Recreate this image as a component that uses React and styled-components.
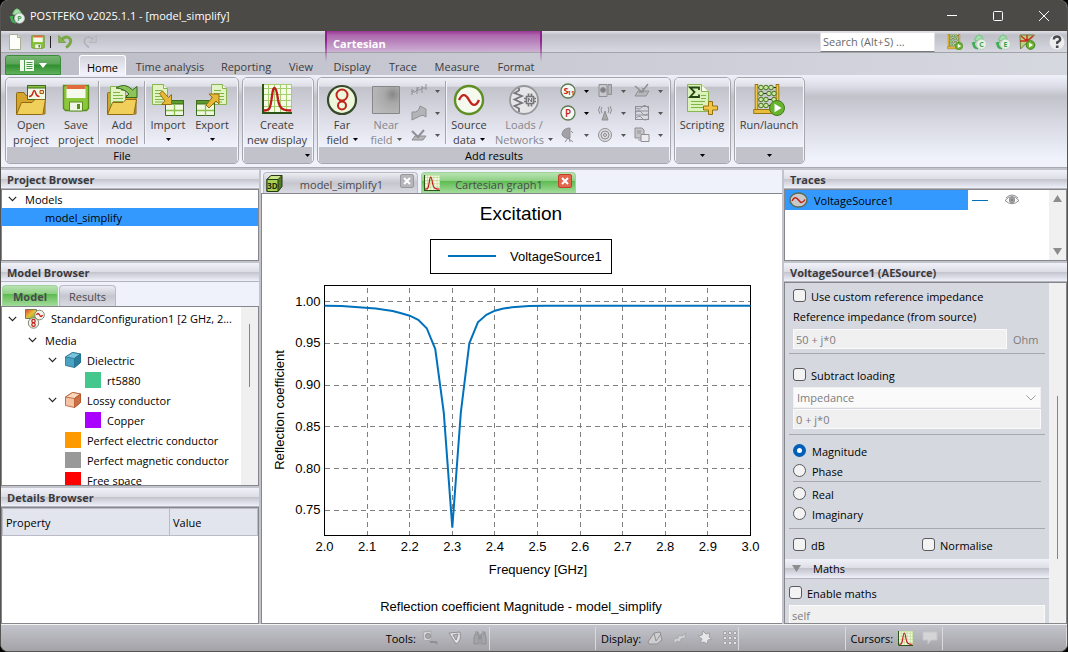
import React, { useState } from "react";
import styled, { createGlobalStyle, css } from "styled-components";


const GlobalStyle = createGlobalStyle`
    * {
        box-sizing: border-box;
    }

    body {
        margin: 0;
        background-color: black;
        color: #1a1a1a;
        font-family: "Open Sans", "Noto Sans", sans-serif;
        font-size: 11px;
    }

    button, input, select {
        font: inherit;
        color: inherit;
        margin: 0;
        padding: 0;
    }

    button {
        background: none;
        border: none;
    }

    svg {
        display: block;
        flex: none;
    }
`

const glossy = css`
    background: linear-gradient(#f1f2f9 0, #dcdce5 50%, #c3c3cc 50%, #eef0fa 100%);
`
const greenGloss = css`
    background: linear-gradient(#b9e2b2 0, #8dd082 40%, #5dbb50 41%, #a4dc9c 100%);
`

/* ---------- window ---------- */

const Window = styled.div`
    display: flex;
    flex-direction: column;
    height: 100vh;
    border: 1px solid #555452;
    border-top: none;
    border-radius: 8px;
    overflow: hidden;
    background-color: #c3c3cc;
`
const TitleBar = styled.header`
    display: flex;
    align-items: center;
    flex: none;
    height: 31px;
    padding-left: 8px;
    background-color: #4b4a47;
    color: white;

    h1 {
        flex: 1;
        margin: 0 0 0 5px;
        font-size: 11px;
        font-weight: 400;
    }
`
const WindowButton = styled.button`
    display: flex;
    align-items: center;
    justify-content: center;
    width: 46px;
    height: 31px;
`
const QuickBar = styled.div`
    display: flex;
    flex: none;
    height: 22px;
    border-bottom: 1px solid #a3a4aa;
    background: linear-gradient(#e0e0e8 0, #bfbfc8 20%, #d6d8e0 100%);
`
const QuickTools = styled.div`
    display: flex;
    align-items: center;
    gap: 9px;
    width: 324px;
    padding-left: 7px;
`
const QuickDivider = styled.span`
    width: 1px;
    height: 12px;
    margin: 0 -2px 0 -4px;
    background-color: #222;
`
const ContextTitle = styled.div`
    position: relative;
    width: 217px;
    padding-left: 8px;
    line-height: 25px;
    color: white;
    font-weight: 700;
    background: linear-gradient(#9b3596 0, #ad68ae 20%, #cdb1d3 100%);

    /* side lines fade out over the tab row */
    &::after {
        content: "";
        position: absolute;
        inset: 0 0 -9px 0;
        border: solid;
        border-width: 0 2px;
        border-image: linear-gradient(#921f90 30%, transparent) 1;
    }
`
const QuickRight = styled.div`
    display: flex;
    flex: 1;
    align-items: center;
    justify-content: flex-end;
    gap: 8px;
    padding-right: 2px;

    input {
        width: 115px;
        height: 20px;
        margin-right: 4px;
        padding: 0 2px;
        border: 1px solid #e0e0e6;
        border-bottom-color: #77777c;
        background-color: white;
    }
    input::placeholder {
        color: #6a6a6a;
    }
    button:last-child {
        margin-left: 5px;
    }
`
const TabRow = styled.nav`
    display: flex;
    align-items: flex-end;
    flex: none;
    height: 22px;
    background: linear-gradient(90deg, #bdbdc7, #d6d8e0);
`
const AppMenu = styled.button`
    display: flex;
    align-items: center;
    justify-content: center;
    gap: 5px;
    width: 56px;
    height: 20px;
    margin: 0 18px 0 4px;
    border: 1px solid #3b8b3b;
    border-radius: 3px 3px 0 0;
    background: linear-gradient(#74b571 0, #59a457 45%, #2f8f2d 50%, #62b05e 100%);
`
const RibbonTab = styled.button`
    width: ${({ $width }) => $width}px;
    height: 20px;
    padding-top: 3px;
    border-radius: 3px 3px 0 0;
    color: #3c3c40;
    white-space: nowrap;
    ${({ $active }) => $active && css`
        color: black;
        border: 1px solid white;
        border-bottom: none;
        background: linear-gradient(#d3d4dc, #f4f5fc);
    `}
`

/* ---------- ribbon ---------- */

const Ribbon = styled.div`
    display: flex;
    gap: 3px;
    flex: none;
    height: 93px;
    padding: 2px 4px 3px;
    border-bottom: 1px solid #a9a9af;
    background: linear-gradient(#eff1fa 0, #dcdde6 12%, #c2c2cb 23%, #d6d7e0 50%, #eff2fb 90%);
`
const Group = styled.section`
    display: flex;
    flex-direction: column;
    width: ${({ $width }) => $width}px;
    border: 1px solid #a6a6ad;
    border-radius: 5px;
    box-shadow: inset 0 0 0 1px #f4f5fb;
    overflow: hidden;
`
const GroupBody = styled.div`
    display: flex;
    flex: 1;
    margin: 0 1px;
    padding-left: 1px;
    background: linear-gradient(#f0f1f8 0, #dddee6 12%, #c2c2cb 13%, #d9dae3 55%, #f1f3fc 100%);
`
const GroupCaption = styled.footer`
    display: flex;
    align-items: center;
    justify-content: ${({ $align }) => $align || "center"};
    height: 16px;
    margin: 0 1px;
    padding: 1px 2px 0;
    background-color: #c2c2ca;
    color: black;
`
const BigButton = styled.button`
    display: flex;
    flex-direction: column;
    align-items: center;
    width: ${({ $width }) => $width}px;
    height: 69px;
    padding-top: 6px;
    line-height: 15px;
    color: #3c3c40;
    white-space: nowrap;

    &:disabled {
        color: #86868c;
    }
    svg:first-child {
        margin-bottom: 1px;
    }
    span {
        display: flex;
        align-items: center;
        gap: 4px;
        min-height: 15px;
    }
`
const Separator = styled.span`
    width: 2px;
    height: 63px;
    margin-top: 3px;
    border-left: 1px solid #a4a4ab;
    background-color: #f4f5fb;
`
const SmallGrid = styled.div`
    display: grid;
    grid-template-columns: repeat(${({ $cols }) => $cols}, 37px);
    grid-template-rows: repeat(3, 22px);
    padding-top: 2px;
`
const SmallButton = styled.button`
    display: flex;
    align-items: center;
    justify-content: space-between;
    padding: 0 5px 0 3px;
`

/* ---------- panels ---------- */

const Main = styled.main`
    display: grid;
    grid-template-columns: 258px minmax(0, 1fr) 283px;
    gap: 2px;
    flex: 1;
    min-height: 0;
    padding-top: 2px;
`
const Column = styled.div`
    display: flex;
    flex-direction: column;
    gap: 2px;
    min-height: 0;
    min-width: 0;
`
const Panel = styled.section`
    display: flex;
    flex-direction: column;
    flex: ${({ $grow }) => ($grow ? "1 1 0" : "none")};
    min-height: 0;

    h2 {
        flex: none;
        height: 19px;
        margin: 0;
        padding-left: 6px;
        border-bottom: 1px solid #b4b4bb;
        font-size: 11px;
        line-height: 20px;
        font-weight: 700;
        color: #3a3a3e;
        ${glossy}
    }
`
const Box = styled.div`
    display: flex;
    flex: ${({ $height }) => ($height ? "none" : "1 1 0")};
    height: ${({ $height }) => ($height ? `${$height}px` : "auto")};
    min-height: 0;
    border: 1px solid #85878d;
    background-color: ${({ $grey }) => ($grey ? "#d6d8df" : "white")};
    overflow: hidden;
`
const Tree = styled.ul`
    flex: 1;
    min-width: 0;
    margin: 0;
    padding: 0;
    list-style: none;
    color: black;
`
const TreeRow = styled.li`
    display: flex;
    align-items: center;
    gap: 6px;
    height: ${({ $height }) => $height || 20}px;
    padding-left: ${({ $indent }) => $indent}px;
    white-space: nowrap;
    background-color: ${({ $selected }) => ($selected ? "#3399ff" : "transparent")};
`
const TreeToggle = styled.button`
    width: 11px;
`
const Swatch = styled.span`
    width: 16px;
    height: 16px;
    background-color: ${({ $color }) => $color};
`
const ScrollTrack = styled.div`
    display: flex;
    flex-direction: column;
    justify-content: ${({ $arrows }) => ($arrows ? "space-between" : "flex-start")};
    align-items: center;
    width: 17px;
    padding: ${({ $top }) => $top || 5}px 0 5px;
    background-color: #f0f0f0;
`
const ScrollThumb = styled.span`
    flex: none;
    width: 1px;
    height: ${({ $length }) => $length}px;
    background-color: #858585;
`
const ModelTabs = styled.div`
    display: flex;
    align-items: flex-end;
    gap: 1px;
    flex: none;
    height: 24px;
    padding-left: 1px;
    background-color: #eff2fb;
`
const ModelTab = styled.button`
    width: ${({ $active }) => ($active ? 56 : 57)}px;
    height: 21px;
    padding-top: 1px;
    border: 1px solid #b9bac2;
    border-bottom: none;
    border-radius: 4px 4px 0 0;
    color: #4a4a4e;
    background: linear-gradient(#ececf3 0, #c6c6cf 50%, #d9dae2 100%);
    ${({ $active }) => $active && css`
        font-weight: 700;
        border-color: #a3d39c;
        ${greenGloss}
    `}
`
const DetailsTable = styled.table`
    width: 100%;
    height: 28px;
    border-collapse: collapse;
    table-layout: fixed;
    color: black;

    th {
        padding: 0 3px;
        border: 1px solid #b9bbc6;
        background-color: #e2e5ee;
        text-align: left;
        font-weight: 400;
    }
    th:first-child {
        width: 167px;
    }
`

/* ---------- document area ---------- */

const DocTabs = styled.div`
    display: flex;
    align-items: flex-end;
    gap: 3px;
    flex: none;
    height: 23px;
    padding-left: 2px;
    background-color: #eff2fb;
`
const DocTab = styled.div`
    display: flex;
    align-items: center;
    width: 155px;
    height: 21px;
    padding: 0 3px 0 2px;
    border: 1px solid #b9bac2;
    border-bottom: none;
    border-radius: 4px 4px 0 0;
    color: #4a4a4e;
    background: linear-gradient(#ececf3 0, #c6c6cf 50%, #d9dae2 100%);
    ${({ $active }) => $active && css`
        border-color: #a3d39c;
        ${greenGloss}
    `}

    & > button:first-child {
        display: flex;
        flex: 1;
        align-items: center;
        color: inherit;
    }
    & > button:first-child span {
        flex: 1;
        padding-top: 2px;
    }
`
const CloseButton = styled.button`
    display: flex;
    align-items: center;
    justify-content: center;
    width: 14px;
    height: 14px;
    margin-bottom: 4px;
    border: 1px solid ${({ $active }) => ($active ? "#c2402a" : "#97979d")};
    border-radius: 2px;
    background-color: ${({ $active }) => ($active ? "#e2674c" : "#b5b5ba")};
`
const ChartBox = styled.div`
    flex: 1;
    min-height: 0;
    border: solid #85878d;
    border-width: 1px 0 1px 1px;
    background-color: white;

    svg {
        width: 100%;
        height: 100%;
        font-family: "Liberation Sans", Arial, sans-serif;
        font-size: 13px;
    }
`

/* ---------- trace panel ---------- */

const TraceRow = styled.div`
    display: flex;
    flex: 1;
    align-items: center;
    height: 20px;
    gap: 4px;
`
const TraceName = styled.span`
    display: flex;
    align-items: center;
    gap: 6px;
    width: 183px;
    height: 20px;
    padding-left: 4px;
    background-color: #3399ff;
    color: black;
`
const LineSample = styled.span`
    width: 16px;
    height: 1px;
    background-color: #0072bd;
`
const EyeButton = styled.button`
    margin-left: 12px;
`
const Form = styled.form`
    flex: 1;
    min-width: 0;
    padding: 3px 4px 0;
    color: black;
`
const FormSection = styled.div`
    padding: ${({ $pad }) => $pad};
    border-bottom: ${({ $last }) => ($last ? "none" : "1px solid #a8a9ae")};
`
const InnerRule = styled.hr`
    height: 1px;
    margin: 0 0 2px;
    border: none;
    background-color: #a8a9ae;
`
const FieldRow = styled.div`
    display: flex;
    align-items: center;
    height: ${({ $height }) => $height || 20}px;
`
const CheckLabel = styled.label`
    display: flex;
    align-items: center;
    gap: 5px;
    width: ${({ $half }) => ($half ? "129px" : "auto")};
`
const Check = styled.input`
    appearance: none;
    width: 13px;
    height: 13px;
    margin-bottom: 2px;
    border: 1px solid #5a5a5e;
    border-radius: 3px;
    background-color: #f3f3f4;
`
const Radio = styled(Check)`
    margin-right: 1px;
    border-radius: 50%;

    &:checked {
        border: 4px solid #005fb8;
        background-color: white;
    }
`
const TextField = styled.input`
    flex: 1;
    min-width: 0;
    height: 20px;
    padding: 0 2px;
    border: 1px solid #fafafa;
    background-color: #f0f0f0;

    &:disabled {
        color: #7c7c80;
    }
`
const Unit = styled.span`
    width: 34px;
    padding-left: 6px;
    color: #7c7c80;
`
const SelectWrap = styled.div`
    display: flex;
    align-items: center;
    height: 21px;
    padding-right: 4px;
    background-color: #fafafa;
    border: 1px solid #f0f0f0;

    select {
        flex: 1;
        appearance: none;
        height: 19px;
        padding-left: 3px;
        border: none;
        background: none;
        opacity: 1;
        color: #7c7c80;
    }
`
const MathsHeader = styled.button`
    display: flex;
    align-items: center;
    gap: 12px;
    width: calc(100% + 8px);
    height: 20px;
    margin: 0 -4px 4px;
    padding-left: 7px;
    border-bottom: 1px solid #b4b4bb;
    ${glossy}
`

/* ---------- status bar ---------- */

const StatusBar = styled.footer`
    display: flex;
    align-items: center;
    flex: none;
    height: 27px;
    border-top: 1px solid #f3f3f6;
    background: linear-gradient(#c4c4cc, #a2a2a7);
    color: black;
`
const StatusSpacer = styled.span`
    flex: ${({ $grow }) => $grow} 1 0;
`
const StatusGroup = styled.div`
    display: flex;
    align-items: center;
    gap: 9px;
    height: 23px;
    width: ${({ $width }) => $width}px;
    padding-left: 5px;
    border: solid #d9d9de;
    border-width: ${({ $open }) => ($open ? "0 1px 0 0" : "0 1px")};

    span {
        width: ${({ $label }) => $label}px;
        margin-right: -6px;
    }
`

/* ---------- icons ---------- */

const Arrow = ({ color = "black" }) => (
    <svg width="5" height="3" viewBox="0 0 5 3"><path d="M0 0h5L2.500 3z" fill={color} /></svg>
)

const Chevron = () => (
    <svg width="9" height="6" viewBox="0 0 9 6" fill="none" stroke="#222" strokeWidth="1.200"><path d="M.8.8 4.500 4.600 8.200.8" /></svg>
)

const Triangle = ({ up }) => (
    <svg width="9" height="7" viewBox="0 0 9 7"><path d={up ? "M4.500 0 9 7H0z" : "M0 0h9L4.500 7z"} fill="#8d8d90" /></svg>
)

const Cross = () => (
    <svg width="8" height="8" viewBox="0 0 8 8"><path d="m1 1 6 6M7 1 1 7" stroke="white" strokeWidth="2" /></svg>
)

const Logo = ({ letter = "P" }) => (
    <svg width="16" height="16" viewBox="0 0 16 16">
        <path d="M3.500 6Q5.500.8 8 .8T12.500 5.500L9 5 6 7z" fill="#a5dcab" stroke="#5fbb6d" strokeWidth=".8" />
        <path d="M.5 8.500 5 7.500l-1 2q0 3 3 4.500v1.500Q2 15 1.500 11z" fill="#3fae55" />
        <circle cx="10.500" cy="10.300" r="5" fill="#e4efe5" stroke="#b4c9b7" strokeWidth=".7" />
        <text x="10.500" y="13" textAnchor="middle" fontSize="7" fontWeight="700" fill="#3f9f50">{letter}</text>
    </svg>
)

const NewFileIcon = () => (
    <svg width="14" height="16" viewBox="0 0 14 16"><path d="M1.500.5h8l3 3v12h-11z" fill="#fdfefa" stroke="#aab096" /><path d="M9.500.5v3h3" fill="#dfe6cf" stroke="#aab096" /></svg>
)

const FloppyIcon = ({ size = 28 }) => (
    <svg width={size} height={size} viewBox="0 0 28 28">
        <path d="M1.500 1.500h25v23l-2 2h-21l-2-2z" fill="#8cc63a" stroke="#5a8d1e" strokeWidth="1.400" />
        <path d="M4.500 2h19v12h-19z" fill="#f5faec" />
        <path d="M4.500 1h19v4h-19z" fill="#e06c3c" />
        <path d="M7.500 18h13v9h-13z" fill="#f0f6e4" stroke="#5a8d1e" />
        <path d="M15 20h3v5h-3z" fill="#5a8d1e" />
    </svg>
)

const UndoIcon = ({ redo }) => (
    <svg width="15" height="15" viewBox="0 0 15 15">
        <g transform={redo ? "matrix(-1 0 0 1 15 0)" : undefined}>
            <path d="M4 5Q10 1 12.500 5.500 13.500 10 8 13.500" fill="none" stroke={redo ? "#adb0b6" : "#7aa844"} strokeWidth={redo ? 1.5 : 3} />
            <path d="M.7 1.500v7h7z" fill={redo ? "#c3c5cb" : "#86b34e"} stroke={redo ? "#adb0b6" : "#6c9a38"} strokeWidth=".7" />
        </g>
    </svg>
)

const AbacusIcon = ({ size = 32 }) => (
    <svg width={size} height={size} viewBox="0 0 32 32">
        <path d="M3.500 0v26M24.500 0v26" stroke="#9a7412" strokeWidth="3.600" />
        <path d="M3.500 1v25M24.500 1v25" stroke="#edc64a" strokeWidth="1.800" />
        <path d="M5 3.500h18M5 9.500h18M5 15.500h18M5 21.500h18" stroke="#2c3a1c" />
        <g fill="#c6e6a0" stroke="#47731f">
            {[[8, 3.5], [13, 3.5], [18, 3.5], [8, 9.5], [16, 9.5], [21, 9.5], [8, 15.5], [13, 15.5], [21, 15.5], [8, 21.5], [13, 21.5]].map(([cx, cy]) => (
                <circle key={`${cx}-${cy}`} cx={cx} cy={cy} r="2.300" />
            ))}
        </g>
        <path d="M.7 25.500h26v4H.7z" fill="#e8bd3c" stroke="#9a7412" />
        <circle cx="24" cy="24" r="7.500" fill="#69b42e" stroke="#3f7d18" />
        <path d="M21.500 19.800 28.500 24l-7 4.200z" fill="white" />
    </svg>
)

const OptimiseIcon = () => (
    <svg width="17" height="16" viewBox="0 0 17 16">
        <path d="M1 1 15.500 1 1.500 15z" fill="#b9cf83" stroke="#6d7b35" />
        <path d="m2 2 6 5M1 7h7M8 7l6-5M8 7V1" stroke="#cc2a1e" strokeWidth="1.400" />
        <circle cx="11.500" cy="11" r="4.300" fill="#69b42e" stroke="#3f7d18" />
        <path d="m10 8.500 4 2.500-4 2.500z" fill="white" />
    </svg>
)

const HelpIcon = () => (
    <svg width="16" height="16" viewBox="0 0 16 16">
        <circle cx="8" cy="8" r="7.500" fill="#eeeef1" />
        <path d="M4.800 5.500Q5 2.500 8 2.500t3.200 2.700Q11.200 7 8.200 8.300V10" fill="none" stroke="#4b4b50" strokeWidth="2.400" />
        <path d="M6.900 11.500h2.600V14H6.900z" fill="#4b4b50" />
    </svg>
)

const MenuIcon = () => (
    <svg width="14" height="11" viewBox="0 0 14 11">
        <path d="M0 0h14v11H0z" fill="#f1f8ee" />
        <path d="M4.500 0v11" stroke="#4b9c49" />
        <path d="M6.500 2.500h6M6.500 4.500h6M6.500 6.500h6M6.500 8.500h6" stroke="#4b9c49" />
    </svg>
)

const FolderBack = () => <path d="M1.500 30V9.500q0-1 1-1H9l2 3h19V30z" fill="#d6a32b" stroke="#8f6a14" />
const FolderFront = () => <path d="M6.500 18.500H17l3-3H30.500L28 29.500q-.3 1-1.300 1H1.500z" fill="#f0cf5a" stroke="#8f6a14" />

const OpenIcon = () => (
    <svg width="32" height="32" viewBox="0 0 32 32">
        <FolderBack />
        <path d="M12.500 1.500h18v14h-18z" fill="#f2f9e2" stroke="#3c6b22" />
        <path d="M12.500 1.500h18V4h-18z" fill="#8ac03e" stroke="#3c6b22" />
        <path d="M14 12.500q3 0 4-4 1.300-4 2.500 0 1 4 4 4" fill="none" stroke="#c8261a" strokeWidth="1.500" />
        <path d="M25 6.500h3.500v3H25z" fill="#f6cf9c" stroke="#a05a1a" />
        <FolderFront />
    </svg>
)

const Page = ({ x = 0, y = 0 }) => (
    <g transform={`translate(${x} ${y})`}>
        <path d="M.5.500h11l4 4v16H.5z" fill="#e3f3c3" stroke="#86b552" />
        <path d="M11.500.5v4h4" fill="#f8fdee" stroke="#86b552" />
        <path d="M3 6.500h7M3 9.500h10M3 12.500h10M3 15.500h10M3 18h8" stroke="#7eb545" strokeWidth="1.200" />
    </g>
)

const AddModelIcon = () => (
    <svg width="32" height="32" viewBox="0 0 32 32">
        <FolderBack />
        <Page x={4} y={2} />
        <FolderFront />
        <path d="M10 4Q19-2 26.500 6l4.500-3.500v11H19.500L23 10Q18 4.500 10 4z" fill="#8cc45a" stroke="#33661c" />
    </svg>
)

const GreenWindow = ({ x, y }) => (
    <g transform={`translate(${x} ${y})`}>
        <path d="M.5.5h18v15H.5z" fill="#f0f8df" stroke="#3c6b22" />
        <path d="M.5.5h18v3.500H.5z" fill="#5f9a2c" stroke="#3c6b22" />
        <path d="M9.500 4v11.500M1 10.500h17" stroke="#8abf4e" strokeWidth="1.300" />
    </g>
)

const ImportIcon = () => (
    <svg width="32" height="32" viewBox="0 0 32 32">
        <Page x={0} y={0} />
        <GreenWindow x={13} y={16} />
        <path d="m7.500 9.500 3-2.500 6 6.500 3-3v10h-10l3.300-3.500z" fill="#e6b83a" stroke="#94700f" />
    </svg>
)

const ExportIcon = () => (
    <svg width="32" height="32" viewBox="0 0 32 32">
        <Page x={15} y={0} />
        <GreenWindow x={0} y={16} />
        <path d="m10 21 3 3 7-7 3 3V10H13l3.300 3.500z" fill="#e6b83a" stroke="#94700f" />
    </svg>
)

const GraphIcon = ({ size = 30 }) => (
    <svg width={size} height={size} viewBox="0 0 30 30">
        <path d="M0 0h30v30H0z" fill="#f6fbe9" />
        <path d="M6.500 0v30M12.500 0v30M18.500 0v30M24.500 0v30M0 4.500h30M0 10.500h30M0 16.500h30M0 22.500h30M29.500 0v30M0 .5h30" stroke="#a5cf6d" />
        <path d="M1 0v29h29" fill="none" stroke="#2b5318" strokeWidth="2" />
        <path d="M2 26.500c6 0 6-2 7.500-11C10.500 8 11 4 12.500 4S15 8 16 15.500c1.500 9 4 11 13 11" fill="none" stroke="#c0191c" strokeWidth="2.300" />
    </svg>
)

const FarFieldIcon = () => (
    <svg width="32" height="32" viewBox="0 0 32 32">
        <circle cx="16" cy="16" r="14" fill="#eef7dc" stroke="#37492b" strokeWidth="2.200" />
        <circle cx="16" cy="11" r="5.500" fill="none" stroke="#c4221c" strokeWidth="2" />
        <circle cx="16" cy="21.500" r="4" fill="none" stroke="#c4221c" strokeWidth="2" />
    </svg>
)

const NearFieldIcon = () => (
    <svg width="30" height="32" viewBox="0 0 30 32">
        <defs>
            <radialGradient id="near" cx=".75" cy=".3" r=".9"><stop offset="0" stopColor="#888" /><stop offset=".35" stopColor="#a8a8a8" /><stop offset="1" stopColor="#bdbdbf" /></radialGradient>
        </defs>
        <path d="M1.500 2.500h27v27h-27z" fill="url(#near)" stroke="#87878a" />
    </svg>
)

const SourceIcon = () => (
    <svg width="32" height="32" viewBox="0 0 32 32">
        <circle cx="16" cy="16" r="14" fill="#f6faee" stroke="#5f8f25" strokeWidth="2.400" />
        <path d="M6 16c3-6.500 6.500-6.500 10 0s7 6.500 10 0" fill="none" stroke="#c4221c" strokeWidth="2.400" />
    </svg>
)

const LoadsIcon = () => (
    <svg width="32" height="32" viewBox="0 0 32 32" fill="none" stroke="#77777b">
        <circle cx="16" cy="16" r="14" fill="#e6e6e9" stroke="#98989b" strokeWidth="1.800" />
        <path d="M11 4v2.500L6.500 9l7.500 3-7.500 3.500 7.500 3.500-7.500 3 4.500 2.500V28" strokeWidth="1.800" />
        <path d="M18.500 12.500h7v7h-7zM20.500 9.500v3m3-3v3m-3 7v3m3-3v3M16 14.500h2.500M16 17.500h2.500m7-3H28m-2.500 3H28" strokeWidth="1.700" />
        <path d="M20.500 18v-4l3 4v-4" />
    </svg>
)

const ScriptIcon = () => (
    <svg width="32" height="32" viewBox="0 0 32 32">
        <path d="M1.500.5h14l7 7v20h-21z" fill="#ddf1bc" stroke="#86b552" />
        <path d="M15.500.5v7h7" fill="#f8fdee" stroke="#86b552" />
        <path d="M13 6V3.500H4L8.500 8 4 13h9v-2.500" fill="none" stroke="#234812" strokeWidth="1.800" />
        <path d="M5 17.500h14M5 20.500h12M5 23.500h12M15 11.500h5M15 14.500h5" stroke="#7eb545" />
        <path d="M22.500 17.500h4V22h5v4h-5v4.500h-4V26h-5v-4h5z" fill="#f1c646" stroke="#94700f" />
    </svg>
)

const RoundLetter = ({ children }) => (
    <svg width="16" height="16" viewBox="0 0 16 16">
        <circle cx="8" cy="8" r="7" fill="#f5f8f1" stroke="#5e7a58" strokeWidth="1.300" />
        {children}
    </svg>
)

// greyed out 16px glyphs, one entry per disabled tool
const glyphs = {
    current: <path d="M1 6v6M6 4v7M11 3v7M15 1v6M1 9h3l2-2h3l2-2h4M1 9l2-2m3 0 2-3" />,
    surface: <path d="M1 7q7 1 8-6l6 3v8q-3-3-6-1l-8 4z" fill="#b4b4b8" />,
    plane: <><path d="M4 9h11l-3 4H1z" fill="#b7b7bb" /><path d="m1 4 6 6 6-7" strokeWidth="2" /></>,
    dish: <><path d="M10 1Q3 1 2 7q1 5 8 4z" fill="#a2a2a6" /><path d="m8 11-3 4m3-4 5 4M11 4l2 2M9 11l1 4" /></>,
    box: <><path d="M2 1.500h8v12H2z" fill="#c9c9cd" /><circle cx="6" cy="7" r="2.500" fill="#7f7f84" /><path d="M11 1.500h3.500v10H11z" fill="#b5b5b9" /></>,
    antenna: <><path d="m8 6-3 9h6z" fill="#aaa" /><path d="M5 2Q3 5 5 8M11 2q2 3 0 6M3 1Q0 5 3 9M13 1q3 4 0 8" /></>,
    rings: <><circle cx="8" cy="8" r="6.500" fill="#dcdce0" /><circle cx="8" cy="8" r="4" /><circle cx="8" cy="8" r="1.500" /></>,
    arrowPlane: <><path d="M4 8h11l-3 5H1z" fill="#b7b7bb" /><path d="m1 3 7 6 6-8M5 9h4V5" strokeWidth="1.500" /></>,
    mesh: <path d="M1 1.500h14M1 6h14M1 10h14M1 14.500h14M1 2q4 4 7 0t7 2M1 8q4-4 7 0t7 0M1 14q4-5 7-1t7 0M1.500 2v12M14.500 2v12" />,
    files: <><path d="M1 1h7l2 2v8H1z" fill="#c5c5c9" /><path d="M7 7.500h8v7H7z" fill="#ececef" /><path d="M3 4h4M3 6h4M4 13h3" /></>,
    camera: <><path d="m1 2 8-1v9l-7 1z" fill="#d6d6d9" stroke="#a6a6aa" /><circle cx="6" cy="6" r="2.500" fill="#aaaaae" /><path d="M8 12h6l1 2" strokeWidth="2" /></>,
    measure: <path d="m2 3 11-1q2 9-4 12zM6 5l3 5 2-6z" fill="#e2e2e5" />,
    binoculars: <path d="M3 4h4v10H2V8zM9 4h4l1 4v6H9zM7 6h2v3H7zM3 2h3v2M10 2h3v2" fill="#a4a4a8" />,
    cone: <path d="m1 12 6-9 6-1 2 8-5 4H2zM7 3l2 8M9 11l5-7" fill="#cfcfd2" />,
    ribbon: <path d="m2 9 4-1 1-3 3 1 4-3-1 5-4 1-1 3-3-1-3 3z" fill="#d2d2d5" stroke="#a9a9ad" />,
    star: <path d="m6 1 3 3 4-1-1 4 3 2-4 1-1 4-3-2-4 1 2-4-4-3 4-1z" fill="#e6e6e8" stroke="#a0a0a4" />,
    grid: <path d="M1.500 1.500h3v3h-3zM6.500 1.500h3v3h-3zM11.500 1.500h3v3h-3zM1.500 6.500h3v3h-3zM6.500 6.500h3v3h-3zM11.500 6.500h3v3h-3zM1.500 11.500h3v3h-3zM6.500 11.500h3v3h-3zM11.500 11.500h3v3h-3z" fill="#e4e4e6" stroke="#a3a3a8" />,
    note: <path d="M1 2h14v8H9l-3 4v-4H1z" fill="#d5d5d8" stroke="#c5c5c9" />,
}

const Glyph = ({ name }) => (
    <svg width="16" height="16" viewBox="0 0 16 16" fill="none" stroke="#8f8f94">{glyphs[name]}</svg>
)

const ConfigIcon = () => (
    <svg width="20" height="20" viewBox="0 0 20 20">
        <defs>
            <linearGradient id="heat" x2="1" y2="1"><stop offset="0" stopColor="#d9432c" /><stop offset=".5" stopColor="#e8c136" /><stop offset="1" stopColor="#4aa84a" /></linearGradient>
        </defs>
        <path d="M.5.5h11v9H.5z" fill="url(#heat)" stroke="#7a7a50" />
        <circle cx="14.500" cy="6" r="4.800" fill="#f7f4ef" stroke="#7d8a70" />
        <path d="M11.500 6q1.500-3 3 0t3 0" fill="none" stroke="#c4221c" strokeWidth="1.300" />
        <circle cx="8.500" cy="14" r="5.200" fill="#f7f4ef" stroke="#7d8a70" />
        <g fill="none" stroke="#c4221c" strokeWidth="1.200">
            <circle cx="8.500" cy="12" r="1.700" />
            <circle cx="8.500" cy="15.700" r="1.700" />
        </g>
    </svg>
)

const CubeIcon = ({ light, mid, dark }) => (
    <svg width="16" height="16" viewBox="0 0 16 16" stroke={dark} strokeWidth=".8">
        <path d="m.5 5 7-4.500 8 1.500v8.500l-6 5-9-2z" fill={mid} />
        <path d="m.5 5 7-4.500 8 1.500-6 4.500z" fill={light} />
        <path d="m9.500 6.500 6-4.500v8.500l-6 5z" fill={dark} fillOpacity=".75" />
    </svg>
)

const ThreeDIcon = () => (
    <svg width="17" height="17" viewBox="0 0 17 17">
        <path d="m1 4.500 4-4h11v11l-4 5H1z" fill="#56782a" stroke="#26380f" />
        <path d="M1 4.500h11v12H1z" fill="#a7d155" stroke="#26380f" />
        <path d="m1 4.500 4-4h11l-4 4z" fill="#c8e58c" stroke="#26380f" />
        <text x="6.500" y="13.500" textAnchor="middle" fontSize="8" fontWeight="700" fill="#1c2a0a">3D</text>
    </svg>
)

const TraceIcon = () => (
    <svg width="19" height="16" viewBox="0 0 19 16">
        <ellipse cx="9.500" cy="8" rx="8.500" ry="7" fill="#c9c9c9" stroke="#5c6a55" strokeWidth="1.400" />
        <path d="M3 9q3-6 6.500-1T16 7.500" fill="none" stroke="#c4221c" strokeWidth="1.500" />
    </svg>
)

const EyeIcon = () => (
    <svg width="16" height="12" viewBox="0 0 16 12" fill="none" stroke="#8e8e92">
        <path d="M1 6.500Q8-1.500 15 6.500 8 13 1 6.500zM2 4Q8-2 14 4" />
        <circle cx="8" cy="6" r="2.700" fill="#a9a9ad" />
        <circle cx="8" cy="6" r="1" fill="#444" />
    </svg>
)

/* ---------- chart ---------- */

const SAMPLES = [
    [2.0, 0.995], [2.04, 0.9945], [2.08, 0.993], [2.12, 0.9915], [2.16, 0.9885], [2.18, 0.986], [2.2, 0.983],
    [2.22, 0.978], [2.24, 0.968], [2.26, 0.943], [2.28, 0.867], [2.3, 0.729], [2.32, 0.867], [2.34, 0.95],
    [2.36, 0.975], [2.38, 0.984], [2.4, 0.989], [2.42, 0.9915], [2.44, 0.993], [2.48, 0.9945], [2.52, 0.995], [3.0, 0.995],
]
const PLOT = { left: 62.5, top: 91.5, width: 426, height: 250 }
const toX = (f) => PLOT.left + (f - 2) * PLOT.width
const toY = (v) => PLOT.top + 16 + (1 - v) * 835

const Chart = () => {
    const xTicks = Array.from({ length: 11 }, (_, i) => 2 + i / 10)
    const yTicks = [1, 0.95, 0.9, 0.85, 0.8, 0.75]
    const right = PLOT.left + PLOT.width
    const bottom = PLOT.top + PLOT.height

    return (
        <svg viewBox="0 0 520 429" role="img" aria-label="Excitation">
            <text x="259" y="26" textAnchor="middle" fontSize="19">Excitation</text>
            <rect x="168.500" y="45.500" width="181" height="34" fill="white" stroke="black" />
            <path d="M186 62h48" stroke="#0072bd" strokeWidth="2" />
            <text x="248" y="67">VoltageSource1</text>

            <g stroke="#808080" strokeDasharray="5 4" shapeRendering="crispEdges">
                {xTicks.slice(1, -1).map((f) => <line key={f} x1={toX(f)} x2={toX(f)} y1={bottom} y2={PLOT.top} />)}
                {yTicks.map((v) => <line key={v} x1={PLOT.left} x2={right} y1={toY(v)} y2={toY(v)} />)}
            </g>
            <rect x={PLOT.left} y={PLOT.top} width={PLOT.width} height={PLOT.height} fill="none" stroke="black" />
            <polyline points={SAMPLES.map(([f, v]) => `${toX(f)},${toY(v)}`).join(" ")} fill="none" stroke="#0072bd" strokeWidth="2" />

            {xTicks.map((f) => <text key={f} x={toX(f)} y={bottom + 15} textAnchor="middle">{f.toFixed(1)}</text>)}
            {yTicks.map((v) => <text key={v} x={PLOT.left - 4} y={toY(v) + 4} textAnchor="end">{v.toFixed(2)}</text>)}

            <text x="276" y="380" textAnchor="middle">Frequency [GHz]</text>
            <text transform="translate(22 216) rotate(-90)" textAnchor="middle">Reflection coefficient</text>
            <text x="259" y="417" textAnchor="middle">Reflection coefficient Magnitude - model_simplify</text>
        </svg>
    )
}

const TABS = [
    ["Home", 47], ["Time analysis", 88], ["Reporting", 64], ["View", 46],
    ["Display", 56], ["Trace", 46], ["Measure", 62], ["Format", 56],
]

const RESULT_TOOLS = ["S", "box", "arrowPlane", "P", "antenna", "mesh", "dish", "rings", "files"]

const ENABLED_TOOLS = {
    S: (
        <RoundLetter>
            <text x="6" y="11" textAnchor="middle" fontSize="9" fontWeight="700" fill="#c4221c">S</text>
            <text x="11" y="12" textAnchor="middle" fontSize="6" fontWeight="700" fill="#c4221c">11</text>
        </RoundLetter>
    ),
    P: <RoundLetter><text x="8" y="12" textAnchor="middle" fontSize="10" fontWeight="600" fill="#c4221c">P</text></RoundLetter>,
}

const App = () => {
    const [tab, setTab] = useState("Home")
    const [part, setPart] = useState("Magnitude")

    const partRadio = (name) => (
        <FieldRow>
            <CheckLabel>
                <Radio type="radio" name="part" checked={part === name} onChange={() => setPart(name)} />
                {name}
            </CheckLabel>
        </FieldRow>
    )

    const toggle = <TreeToggle aria-label="Collapse"><Chevron /></TreeToggle>

    return (
        <Window>
            <GlobalStyle />
            <TitleBar>
                <Logo />
                <h1>POSTFEKO v2025.1.1 - [model_simplify]</h1>
                <WindowButton aria-label="Minimize"><svg width="10" height="10" viewBox="0 0 10 10"><path d="M0 4.500h10" stroke="white" /></svg></WindowButton>
                <WindowButton aria-label="Maximize"><svg width="10" height="10" viewBox="0 0 10 10"><rect x=".5" y=".5" width="9" height="9" rx="1" fill="none" stroke="white" /></svg></WindowButton>
                <WindowButton aria-label="Close"><svg width="10" height="10" viewBox="0 0 10 10"><path d="m0 0 10 10M10 0 0 10" stroke="white" /></svg></WindowButton>
            </TitleBar>

            <QuickBar>
                <QuickTools>
                    <button aria-label="New"><NewFileIcon /></button>
                    <button aria-label="Save"><FloppyIcon size={14} /></button>
                    <QuickDivider />
                    <button aria-label="Undo"><UndoIcon /></button>
                    <button aria-label="Redo" disabled><UndoIcon redo /></button>
                </QuickTools>
                <ContextTitle>Cartesian</ContextTitle>
                <QuickRight>
                    <input type="text" aria-label="Search" placeholder="Search (Alt+S) ..." />
                    <button aria-label="Run solver"><AbacusIcon size={16} /></button>
                    <button aria-label="CADFEKO"><Logo letter="C" /></button>
                    <button aria-label="EDITFEKO"><Logo letter="E" /></button>
                    <button aria-label="Run optimiser"><OptimiseIcon /></button>
                    <button aria-label="Help"><HelpIcon /></button>
                </QuickRight>
            </QuickBar>

            <TabRow>
                <AppMenu aria-label="Application menu">
                    <MenuIcon />
                    <svg width="8" height="5" viewBox="0 0 8 5"><path d="M0 0h8L4 5z" fill="white" /></svg>
                </AppMenu>
                {TABS.map(([name, width]) => (
                    <RibbonTab key={name} $width={width} $active={tab === name} onClick={() => setTab(name)}>{name}</RibbonTab>
                ))}
            </TabRow>

            <Ribbon>
                <Group $width={234}>
                    <GroupBody>
                        <BigButton $width={46}><OpenIcon /><span>Open</span><span>project</span></BigButton>
                        <BigButton $width={44}><svg width="28" height="32" viewBox="0 0 28 32"><FloppyIcon /></svg><span>Save</span><span>project</span></BigButton>
                        <Separator />
                        <BigButton $width={44}><AddModelIcon /><span>Add</span><span>model</span></BigButton>
                        <Separator />
                        <BigButton $width={44}><ImportIcon /><span>Import</span><span><Arrow /></span></BigButton>
                        <BigButton $width={44}><ExportIcon /><span>Export</span><span><Arrow /></span></BigButton>
                    </GroupBody>
                    <GroupCaption>File</GroupCaption>
                </Group>

                <Group $width={72}>
                    <GroupBody>
                        <BigButton $width={64}><svg width="30" height="32" viewBox="0 0 30 32"><GraphIcon /></svg><span>Create</span><span>new display</span></BigButton>
                    </GroupBody>
                    <GroupCaption $align="flex-end"><Arrow /></GroupCaption>
                </Group>

                <Group $width={354}>
                    <GroupBody>
                        <BigButton $width={44}><FarFieldIcon /><span>Far</span><span>field <Arrow /></span></BigButton>
                        <BigButton $width={44} disabled><NearFieldIcon /><span>Near</span><span>field <Arrow color="#555" /></span></BigButton>
                        <SmallGrid $cols={1}>
                            {["current", "surface", "plane"].map((name) => (
                                <SmallButton key={name} aria-label={name} disabled><Glyph name={name} /><Arrow color="#555" /></SmallButton>
                            ))}
                        </SmallGrid>
                        <Separator />
                        <BigButton $width={44}><SourceIcon /><span>Source</span><span>data <Arrow /></span></BigButton>
                        <BigButton $width={66} disabled><LoadsIcon /><span>Loads /</span><span>Networks <Arrow color="#555" /></span></BigButton>
                        <SmallGrid $cols={3}>
                            {RESULT_TOOLS.map((name) => {
                                const icon = ENABLED_TOOLS[name]
                                return (
                                    <SmallButton key={name} aria-label={name} disabled={!icon}>
                                        {icon || <Glyph name={name} />}
                                        <Arrow color={icon ? "black" : "#555"} />
                                    </SmallButton>
                                )
                            })}
                        </SmallGrid>
                    </GroupBody>
                    <GroupCaption>Add results</GroupCaption>
                </Group>

                <Group $width={57}>
                    <GroupBody><BigButton $width={50}><ScriptIcon /><span>Scripting</span></BigButton></GroupBody>
                    <GroupCaption><Arrow /></GroupCaption>
                </Group>
                <Group $width={71}>
                    <GroupBody><BigButton $width={64}><AbacusIcon /><span>Run/launch</span></BigButton></GroupBody>
                    <GroupCaption><Arrow /></GroupCaption>
                </Group>
            </Ribbon>

            <Main>
                <Column>
                    <Panel>
                        <h2>Project Browser</h2>
                        <Box $height={72}>
                            <Tree>
                                <TreeRow $height={18} $indent={6}>{toggle}Models</TreeRow>
                                <TreeRow $height={18} $indent={43} $selected>model_simplify</TreeRow>
                            </Tree>
                        </Box>
                    </Panel>
                    <Panel $grow>
                        <h2>Model Browser</h2>
                        <ModelTabs>
                            <ModelTab $active>Model</ModelTab>
                            <ModelTab>Results</ModelTab>
                        </ModelTabs>
                        <Box>
                            <Tree>
                                <TreeRow $height={23} $indent={6}>{toggle}<ConfigIcon />StandardConfiguration1 [2 GHz, 2...</TreeRow>
                                <TreeRow $indent={26}>{toggle}Media</TreeRow>
                                <TreeRow $indent={46}>{toggle}<CubeIcon light="#7cc4dc" mid="#4aa3c2" dark="#23708f" />Dielectric</TreeRow>
                                <TreeRow $indent={83}><Swatch $color="#43c78c" />rt5880</TreeRow>
                                <TreeRow $indent={46}>{toggle}<CubeIcon light="#fbd9c0" mid="#f3c3a3" dark="#b9562a" />Lossy conductor</TreeRow>
                                <TreeRow $indent={83}><Swatch $color="#aa00ff" />Copper</TreeRow>
                                <TreeRow $indent={63}><Swatch $color="#ff9900" />Perfect electric conductor</TreeRow>
                                <TreeRow $indent={63}><Swatch $color="#999999" />Perfect magnetic conductor</TreeRow>
                                <TreeRow $indent={63}><Swatch $color="#ff0000" />Free space</TreeRow>
                            </Tree>
                            <ScrollTrack $top={17}><ScrollThumb $length={63} /></ScrollTrack>
                        </Box>
                    </Panel>
                    <Panel>
                        <h2>Details Browser</h2>
                        <Box $height={117}>
                            <DetailsTable>
                                <thead><tr><th>Property</th><th>Value</th></tr></thead>
                            </DetailsTable>
                        </Box>
                    </Panel>
                </Column>

                <Panel>
                    <DocTabs>
                        <DocTab>
                            <button><ThreeDIcon /><span>model_simplify1</span></button>
                            <CloseButton aria-label="Close model_simplify1"><Cross /></CloseButton>
                        </DocTab>
                        <DocTab $active>
                            <button><GraphIcon size={16} /><span>Cartesian graph1</span></button>
                            <CloseButton $active aria-label="Close Cartesian graph1"><Cross /></CloseButton>
                        </DocTab>
                    </DocTabs>
                    <ChartBox><Chart /></ChartBox>
                </Panel>

                <Column>
                    <Panel>
                        <h2>Traces</h2>
                        <Box $height={72}>
                            <TraceRow>
                                <TraceName><TraceIcon />VoltageSource1</TraceName>
                                <LineSample />
                                <EyeButton aria-label="Show trace"><EyeIcon /></EyeButton>
                            </TraceRow>
                            <ScrollTrack $arrows><Triangle up /><Triangle /></ScrollTrack>
                        </Box>
                    </Panel>
                    <Panel $grow>
                        <h2>VoltageSource1 (AESource)</h2>
                        <Box $grey>
                            <Form>
                                <FormSection $pad="0 4px 1px">
                                    <FieldRow><CheckLabel><Check type="checkbox" />Use custom reference impedance</CheckLabel></FieldRow>
                                    <FieldRow as="label" htmlFor="reference">Reference impedance (from source)</FieldRow>
                                    <FieldRow $height={26}>
                                        <TextField id="reference" disabled defaultValue="50 + j*0" />
                                        <Unit>Ohm</Unit>
                                    </FieldRow>
                                </FormSection>
                                <FormSection $pad="9px 4px 4px">
                                    <FieldRow $height={24}><CheckLabel><Check type="checkbox" />Subtract loading</CheckLabel></FieldRow>
                                    <SelectWrap>
                                        <select aria-label="Loading" disabled><option>Impedance</option></select>
                                        <svg width="10" height="6" viewBox="0 0 10 6" fill="none" stroke="#a0a0a3"><path d="m.5.5 4.500 4.500L9.500.5" /></svg>
                                    </SelectWrap>
                                    <FieldRow $height={22}>
                                        <TextField aria-label="Loading value" disabled defaultValue="0 + j*0" />
                                    </FieldRow>
                                </FormSection>
                                <FormSection $pad="6px 4px 4px">
                                    {partRadio("Magnitude")}
                                    {partRadio("Phase")}
                                    <InnerRule />
                                    {partRadio("Real")}
                                    {partRadio("Imaginary")}
                                </FormSection>
                                <FormSection $pad="6px 4px 4px" $last>
                                    <FieldRow>
                                        <CheckLabel $half><Check type="checkbox" />dB</CheckLabel>
                                        <CheckLabel><Check type="checkbox" />Normalise</CheckLabel>
                                    </FieldRow>
                                </FormSection>
                                <MathsHeader type="button"><Triangle />Maths</MathsHeader>
                                <FieldRow><CheckLabel><Check type="checkbox" />Enable maths</CheckLabel></FieldRow>
                                <FieldRow $height={24}><TextField aria-label="Maths expression" disabled defaultValue="self" /></FieldRow>
                            </Form>
                            <ScrollTrack $top={113}><ScrollThumb $length={163} /></ScrollTrack>
                        </Box>
                    </Panel>
                </Column>
            </Main>

            <StatusBar>
                <StatusSpacer $grow={36} />
                <StatusGroup $width={109} $label={33} $open>
                    <span>Tools:</span><Glyph name="camera" /><Glyph name="measure" /><Glyph name="binoculars" />
                </StatusGroup>
                <StatusSpacer $grow={10} />
                <StatusGroup $width={144} $label={44}>
                    <span>Display:</span><Glyph name="cone" /><Glyph name="ribbon" /><Glyph name="star" /><Glyph name="grid" />
                </StatusGroup>
                <StatusSpacer $grow={10} />
                <StatusGroup $width={98} $label={44}>
                    <span>Cursors:</span><GraphIcon size={15} /><Glyph name="note" />
                </StatusGroup>
                <StatusSpacer $grow={10} />
                <StatusGroup $width={19} $open />
            </StatusBar>
        </Window>
    )
}

export default App
